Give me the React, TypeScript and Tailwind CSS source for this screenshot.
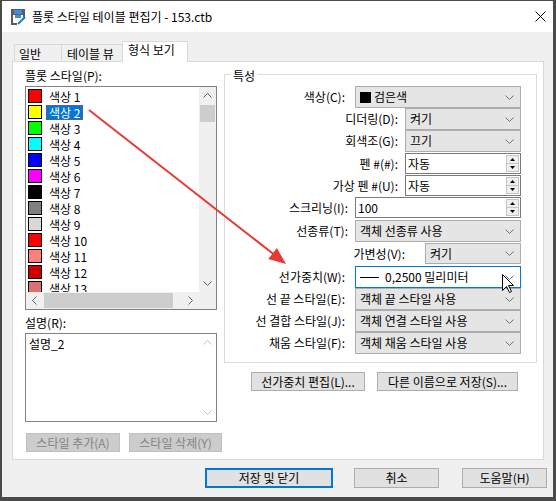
import React from 'react';

type Kind = 'combo' | 'spin' | 'focus';

interface PropRow {
  label: string;
  labelGap: string;
  width: string;
  box: string;
  kind: Kind;
  value: string;
  swatch?: boolean;
}

const rows: PropRow[] = [
  { label: '색상(C):', labelGap: 'mr-[10px]', width: 'w-[166px]', box: 'h-[22px]', kind: 'combo', value: '검은색', swatch: true },
  { label: '디더링(D):', labelGap: 'mr-[7px]', width: 'w-[116px]', box: 'h-[22px]', kind: 'combo', value: '켜기' },
  { label: '회색조(G):', labelGap: 'mr-[7px]', width: 'w-[116px]', box: 'h-[22px]', kind: 'combo', value: '끄기' },
  { label: '펜 #(#):', labelGap: 'mr-[7px]', width: 'w-[116px]', box: 'h-[21px] mt-px', kind: 'spin', value: '자동' },
  { label: '가상 펜 #(U):', labelGap: 'mr-[7px]', width: 'w-[116px]', box: 'h-[21px] mt-px', kind: 'spin', value: '자동' },
  { label: '스크리닝(I):', labelGap: 'mr-[7px]', width: 'w-[166px]', box: 'h-[21px] mt-px', kind: 'spin', value: '100' },
  { label: '선종류(T):', labelGap: 'mr-[7px]', width: 'w-[166px]', box: 'h-[22px] mt-[2px]', kind: 'combo', value: '객체 선종류 사용' },
  { label: '가변성(V):', labelGap: 'mr-[20px]', width: 'w-[96px]', box: 'h-[21px] mt-px', kind: 'combo', value: '켜기' },
  { label: '선가중치(W):', labelGap: 'mr-[10px]', width: 'w-[166px]', box: 'h-[22px] mt-[2px]', kind: 'focus', value: '0,2500 밀리미터' },
  { label: '선 끝 스타일(E):', labelGap: 'mr-[10px]', width: 'w-[166px]', box: 'h-[22px]', kind: 'combo', value: '객체 끝 스타일 사용' },
  { label: '선 결합 스타일(J):', labelGap: 'mr-[10px]', width: 'w-[166px]', box: 'h-[22px]', kind: 'combo', value: '객체 연결 스타일 사용' },
  { label: '채움 스타일(F):', labelGap: 'mr-[10px]', width: 'w-[166px]', box: 'h-[22px]', kind: 'combo', value: '객체 채움 스타일 사용' },
];

// 플롯 스타일 목록 (색상 견본)
const styles = [
  { name: '색상 1', swatch: 'bg-[#ff0000]' },
  { name: '색상 2', swatch: 'bg-[#ffff00]' },
  { name: '색상 3', swatch: 'bg-[#00ff00]' },
  { name: '색상 4', swatch: 'bg-[#00ffff]' },
  { name: '색상 5', swatch: 'bg-[#0000ff]' },
  { name: '색상 6', swatch: 'bg-[#ff00ff]' },
  { name: '색상 7', swatch: 'bg-[#000000]' },
  { name: '색상 8', swatch: 'bg-[#808080]' },
  { name: '색상 9', swatch: 'bg-[#d9d9d9]' },
  { name: '색상 10', swatch: 'bg-[#ff0000]' },
  { name: '색상 11', swatch: 'bg-[#ff7f7f]' },
  { name: '색상 12', swatch: 'bg-[#d40000]' },
  { name: '색상 13', swatch: 'bg-[#dd7070]' },
];

const Chevron = ({ up = false, color = '#606060' }: { up?: boolean; color?: string }) => (
  <svg width="9" height="5" viewBox="0 0 9 5" className={up ? 'rotate-180' : ''}>
    <polyline points="0.5,0.5 4.5,4.5 8.5,0.5" fill="none" stroke={color} strokeWidth="1" />
  </svg>
);

const SideChevron = ({ left = false }: { left?: boolean }) => (
  <svg width="5" height="9" viewBox="0 0 5 9" className={left ? 'rotate-180' : ''}>
    <polyline points="0.5,0.5 4.5,4.5 0.5,8.5" fill="none" stroke="#606060" strokeWidth="1" />
  </svg>
);

const Tri = ({ up = false }: { up?: boolean }) => (
  <svg width="5" height="3" viewBox="0 0 5 3">
    <polygon points={up ? '2.5,0 5,3 0,3' : '0,0 5,0 2.5,3'} fill="#000" />
  </svg>
);

const Control = ({ row }: { row: PropRow }) => {
  if (row.kind === 'spin') {
    return (
      <div className={`flex h-full ${row.width} border border-[#7a7a7a] bg-white`}>
        <div className="flex flex-1 items-center pl-[2px]">{row.value}</div>
        <div className="my-px mr-px flex w-[13px] flex-col border border-[#c4c4c4]">
          <div className="flex flex-1 items-center justify-center border-b border-[#c4c4c4] bg-[#efefef]">
            <Tri up />
          </div>
          <div className="flex flex-1 items-center justify-center bg-[#efefef]">
            <Tri />
          </div>
        </div>
      </div>
    );
  }
  const focused = row.kind === 'focus';
  return (
    <div
      className={`flex h-full items-center pl-[4px] pr-[6px] ${row.width} border ${
        focused ? 'border-[#0078d7] bg-white' : 'border-[#adadad] bg-[#e5e5e5]'
      }`}
    >
      <div className="flex flex-1 items-center whitespace-nowrap">
        {row.swatch && <span className="mr-[3px] h-[11px] w-[11px] bg-black" />}
        {focused && <span className="mr-[6px] h-px w-[19px] bg-black" />}
        {row.value}
      </div>
      <Chevron color="#707070" />
    </div>
  );
};

const Button = ({ className, children }: { className: string; children: React.ReactNode }) => (
  <div className={`flex items-center justify-center whitespace-nowrap border ${className}`}>{children}</div>
);

export default function App() {
  return (
    <div className="relative h-[501px] w-[556px] overflow-hidden bg-[#4a4a4a] font-['Noto_Sans_CJK_KR',sans-serif] text-[12px] leading-[14px] text-black">
      <div className="ml-[2px] mt-px flex h-[496px] w-[551px] flex-col bg-[#f0f0f0]">
        {/* 제목 표시줄 */}
        <div className="flex h-[31px] items-center bg-white pl-[8px] pr-[7px]">
          <svg width="16" height="17" viewBox="0 0 16 17">
            <rect x="1" y="1" width="14" height="6" fill="#5c5c5c" />
            <rect x="4" y="2" width="8" height="4" fill="#3d8fe0" />
            <rect x="5" y="7" width="6" height="3" fill="#3d8fe0" />
            <rect x="1" y="7" width="2" height="9" fill="#5c5c5c" />
            <rect x="13" y="7" width="2" height="4" fill="#5c5c5c" />
            <rect x="1" y="15" width="6" height="2" fill="#5c5c5c" />
            <line x1="8" y1="16" x2="15" y2="9" stroke="#1f7ad6" strokeWidth="2" />
          </svg>
          <span className="ml-[6px] flex-1 text-[12px]">플롯 스타일 테이블 편집기 - 153.ctb</span>
          <svg width="11" height="11" viewBox="0 0 11 11">
            <line x1="0.5" y1="0.5" x2="10.5" y2="10.5" stroke="#000" strokeWidth="1" />
            <line x1="10.5" y1="0.5" x2="0.5" y2="10.5" stroke="#000" strokeWidth="1" />
          </svg>
        </div>

        {/* 탭 */}
        <div className="relative z-10 ml-[10px] mt-[9px] flex h-[21px] items-end pl-[2px]">
          <div className="mb-px h-[17px] w-[48px] border border-b-0 border-[#d9d9d9] bg-[#f0f0f0] pl-[4px] pt-[2px]">일반</div>
          <div className="-ml-px mb-px h-[17px] w-[62px] border border-b-0 border-[#d9d9d9] bg-[#f0f0f0] pl-[5px] pt-[2px]">테이블 뷰</div>
          <div className="-ml-px h-[21px] w-[66px] border border-b-0 border-[#d9d9d9] bg-white pl-[5px] pt-px">형식 보기</div>
        </div>

        {/* 탭 패널 */}
        <div className="-mt-px ml-[10px] flex h-[399px] w-[532px] border border-[#d9d9d9] bg-white">
          {/* 왼쪽: 스타일 목록 */}
          <div className="ml-[12px] flex w-[192px] flex-col">
            <div className="mt-[7px] h-[14px]">플롯 스타일(P):</div>
            <div className="mt-[3px] grid h-[224px] grid-cols-[1fr_17px] grid-rows-[1fr_17px] border border-[#828282]">
              <div className="overflow-hidden pt-px">
                {styles.map((s, i) => (
                  <div key={s.name} className="flex h-[16px] items-center">
                    <span className={`ml-[2px] h-[14px] w-[14px] border border-black ${s.swatch}`} />
                    <span
                      className={`ml-[4px] px-[2px] leading-[13px] ${
                        i === 1 ? 'border border-dotted border-[#c04040] bg-[#0078d7] text-white' : 'border border-transparent'
                      }`}
                    >
                      {s.name}
                    </span>
                  </div>
                ))}
              </div>
              <div className="flex flex-col bg-[#f0f0f0]">
                <div className="flex h-[17px] items-center justify-center">
                  <Chevron up />
                </div>
                <div className="mx-px mt-px h-[17px] bg-[#cdcdcd]" />
                <div className="flex-1" />
                <div className="flex h-[17px] items-center justify-center">
                  <Chevron />
                </div>
              </div>
              <div className="flex bg-[#f0f0f0]">
                <div className="flex w-[17px] items-center justify-center">
                  <SideChevron left />
                </div>
                <div className="my-px ml-px w-[129px] bg-[#cdcdcd]" />
                <div className="flex-1" />
                <div className="flex w-[17px] items-center justify-center">
                  <SideChevron />
                </div>
              </div>
              <div className="bg-[#f0f0f0]" />
            </div>

            <div className="mt-[6px] h-[14px]">설명(R):</div>
            <div className="mt-[3px] flex h-[89px] border border-[#828282]">
              <div className="flex-1 pl-[3px] pt-[3px]">설명_2</div>
              <div className="flex w-[17px] flex-col justify-between">
                <div className="flex h-[17px] items-center justify-center">
                  <Chevron up color="#c0c0c0" />
                </div>
                <div className="flex h-[17px] items-center justify-center">
                  <Chevron color="#c0c0c0" />
                </div>
              </div>
            </div>

            <div className="ml-px mt-[11px] flex gap-[9px]">
              <Button className="h-[19px] w-[94px] shrink-0 border-[#bfbfbf] bg-[#cccccc] text-[#838383]">스타일 추가(A)</Button>
              <Button className="h-[19px] w-[93px] shrink-0 border-[#bfbfbf] bg-[#cccccc] text-[#838383]">스타일 삭제(Y)</Button>
            </div>
          </div>

          {/* 오른쪽: 특성 */}
          <div className="ml-[7px] mt-[12px] flex flex-col">
            <div className="relative h-[289px] w-[313px] border border-[#dcdcdc] pr-[15px] pt-[11px]">
              <span className="absolute -top-[6px] left-[5px] bg-white px-[3px]">특성</span>
              {rows.map((r) => (
                <div key={r.label} className={`flex items-center justify-end whitespace-nowrap ${r.box}`}>
                  <span className={r.labelGap}>{r.label}</span>
                  <Control row={r} />
                </div>
              ))}
            </div>
            <div className="ml-[27px] mt-[9px] flex gap-[12px]">
              <Button className="h-[19px] w-[114px] border-[#adadad] bg-[#e1e1e1]">선가중치 편집(L)...</Button>
              <Button className="h-[19px] w-[141px] border-[#adadad] bg-[#e1e1e1]">다른 이름으로 저장(S)...</Button>
            </div>
          </div>
        </div>

        {/* 하단 버튼 */}
        <div className="ml-[203px] mt-[8px] flex">
          <Button className="h-[20px] w-[128px] border-2 border-[#0078d7] bg-[#e1e1e1]">저장 및 닫기</Button>
          <Button className="ml-[21px] h-[20px] w-[85px] border-[#adadad] bg-[#e1e1e1]">취소</Button>
          <Button className="ml-[23px] h-[20px] w-[85px] border-[#adadad] bg-[#e1e1e1]">도움말(H)</Button>
        </div>
      </div>

      {/* 빨간 화살표 주석 */}
      <svg className="pointer-events-none absolute left-0 top-0" width="556" height="501" viewBox="0 0 556 501">
        <line x1="89" y1="110" x2="274" y2="254.5" stroke="#e63b35" strokeWidth="2" />
        <polygon points="286,264 268.3,259 276.9,248" fill="#e63b35" />
      </svg>

      {/* 마우스 커서 */}
      <svg className="pointer-events-none absolute left-[502px] top-[274px]" width="13" height="20" viewBox="0 0 13 20">
        <path d="M0.5 0.5 L0.5 16.5 L4.5 12.5 L7.5 18.5 L9.5 17.5 L6.5 11.5 L11.5 11.5 Z" fill="#fff" stroke="#000" strokeWidth="1" />
      </svg>
    </div>
  );
}
